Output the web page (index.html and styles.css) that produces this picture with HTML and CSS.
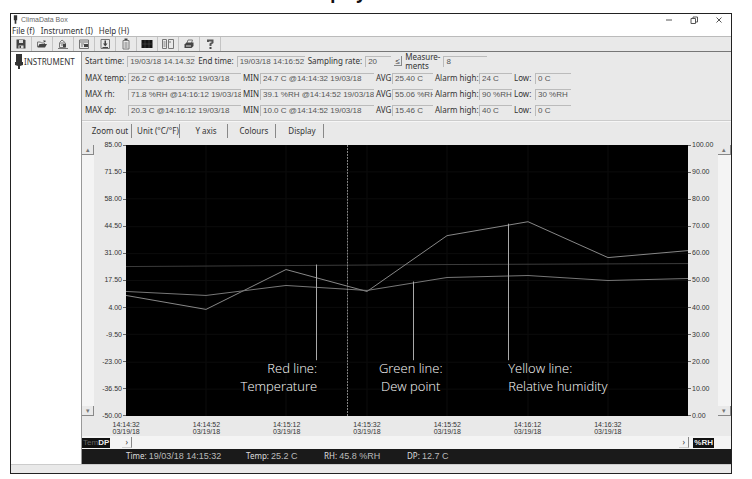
FILE: index.html
```html
<!DOCTYPE html>
<html lang="en">
<head>
  <meta charset="UTF-8">
  <meta name="viewport" content="width=device-width, initial-scale=1">
  <title>ClimaData Box</title>
  <link rel="stylesheet" href="styles.css">
</head>
<body>

  <h1 class="page-heading">Display</h1>

  <div class="window">
    <header class="titlebar">
      <svg class="app-icon" viewBox="0 0 6 10"><path d="M1 0h4v6H1zM2 6h2v4H2z"/></svg>
      <span class="app-name">ClimaData Box</span>
      <button class="win-btn" aria-label="Minimize"><svg viewBox="0 0 8 8"><path d="M1 4h6"/></svg></button>
      <button class="win-btn" aria-label="Restore"><svg viewBox="0 0 8 8"><path d="M1 2.500h4.500v5H1zM3 2.500v-1.500h4.500v5H5.500"/></svg></button>
      <button class="win-btn" aria-label="Close"><svg viewBox="0 0 8 8"><path d="M1.500 1.500l5 5M6.500 1.500l-5 5"/></svg></button>
    </header>

    <nav class="menu">
      <button>File (f)</button>
      <button>Instrument (I)</button>
      <button>Help (H)</button>
    </nav>

    <div class="toolbar">
      <button aria-label="Save"><svg viewBox="0 0 12 12"><path class="fill" d="M1.500 1.500h8l1 1v8h-9z"/><path class="paper" d="M4 2h4v3H4zM3.500 7.500h5v3h-5z"/><path class="fill" d="M4.500 8h1.500v2H4.500z"/></svg></button>
      <button aria-label="Open"><svg viewBox="0 0 12 12"><path class="line" d="M1.500 9V4h3l1 1h3v1.500"/><path class="fill" d="M1.500 9.500l2-3.500h7.500l-2 3.500zM7 2.500h2.500v1.500H8z"/></svg></button>
      <button aria-label="Connect"><svg viewBox="0 0 12 12"><path class="line" d="M2.500 4.500L5 2l3 2.500M2.500 5h6v4.500h-6zM1 10.500h10M4 7h4"/><path class="fill" d="M6 6h3v3H6z"/></svg></button>
      <button aria-label="Instrument settings"><svg viewBox="0 0 12 12"><path class="line" d="M1.500 2h9v8.500h-9zM1.500 4h9M3 6h3M3 8h2"/><path class="fill" d="M6 6h4v3H6z"/></svg></button>
      <button aria-label="Download"><svg viewBox="0 0 12 12"><path class="line" d="M2 1.500h8.500v9H2z"/><path class="fill" d="M5.500 2.500h1.500v3h1.500L6.250 8.500 4 5.500h1.500zM3.500 9h5.500v1H3.500z"/></svg></button>
      <button aria-label="Clipboard"><svg viewBox="0 0 12 12"><path class="fill" d="M4.500 0.500h3v2h-3z"/><path class="line" d="M3 2.500h6v8.500H3zM4.500 5h3M4.500 7h3M4.500 9h3"/></svg></button>
      <button aria-label="Graph"><svg viewBox="0 0 12 12"><path class="black" d="M0.500 2h11v8h-11z"/><path class="grid" d="M0.500 6h11M4 2v8M8 2v8"/></svg></button>
      <button aria-label="Table"><svg viewBox="0 0 12 12"><path class="line" d="M0.500 1.500h4v9h-4zM6.500 1.500h5v9h-5zM1.500 4h2M1.500 6h2M1.500 8h2M6.500 4H9"/></svg></button>
      <button aria-label="Print"><svg viewBox="0 0 12 12"><path class="line" d="M4 5l1-3h4.500L8.500 5"/><path class="fill" d="M1.500 6.500l2-2h7v3.500l-2 2h-7z"/><path class="paper" d="M3 7.500h5v1H3z"/></svg></button>
      <button aria-label="Help"><svg viewBox="0 0 12 12"><path class="thick" d="M4 4V2.500h4.500v2L6.500 6v2"/><path class="fill" d="M5.500 9h2v2h-2z"/></svg></button>
    </div>

    <div class="workspace">
      <aside class="tree">
        <svg class="device" viewBox="0 0 8 15"><path d="M1 0h6v8H1z"/><path d="M0 8h8v3L5 12v3H3v-3L0 11z"/></svg>
        <span>INSTRUMENT</span>
      </aside>

      <main class="panel">
        <section class="readings">
          <div class="session">
            <label for="start">Start time:</label><input id="start" class="w-time" value="19/03/18 14.14.32" readonly>
            <label for="end">End time:</label><input id="end" class="w-time" value="19/03/18 14:16:52" readonly>
            <label for="rate">Sampling rate:</label><input id="rate" class="w-rate" value="20" readonly>
            <button class="spin" aria-label="Set rate">≤</button>
            <label for="count" class="count-label">Measure-<br>ments</label><input id="count" class="w-count" value="8" readonly>
          </div>
          <div class="stats">
            <label for="t-max">MAX temp:</label><input id="t-max" value="26.2 C @14:16:52 19/03/18" readonly>
            <label for="t-min">MIN</label><input id="t-min" value="24.7 C @14:14:32 19/03/18" readonly>
            <label for="t-avg">AVG</label><input id="t-avg" value="25.40 C" readonly>
            <label for="t-high">Alarm high:</label><input id="t-high" value="24 C" readonly>
            <label for="t-low">Low:</label><input id="t-low" value="0 C" readonly>

            <label for="h-max">MAX rh:</label><input id="h-max" value="71.8 %RH @14:16:12 19/03/18" readonly>
            <label for="h-min">MIN</label><input id="h-min" value="39.1 %RH @14:14:52 19/03/18" readonly>
            <label for="h-avg">AVG</label><input id="h-avg" value="55.06 %RH" readonly>
            <label for="h-high">Alarm high:</label><input id="h-high" value="90 %RH" readonly>
            <label for="h-low">Low:</label><input id="h-low" value="30 %RH" readonly>

            <label for="d-max">MAX dp:</label><input id="d-max" value="20.3 C @14:16:12 19/03/18" readonly>
            <label for="d-min">MIN</label><input id="d-min" value="10.0 C @14:14:52 19/03/18" readonly>
            <label for="d-avg">AVG</label><input id="d-avg" value="15.46 C" readonly>
            <label for="d-high">Alarm high:</label><input id="d-high" value="40 C" readonly>
            <label for="d-low">Low:</label><input id="d-low" value="0 C" readonly>
          </div>
        </section>

        <div class="actions">
          <button>Zoom out</button>
          <button>Unit (°C/°F)</button>
          <button>Y axis</button>
          <button>Colours</button>
          <button>Display</button>
        </div>

        <section class="chart">
          <div class="scroller">
            <button aria-label="Left axis up">▴</button>
            <button aria-label="Left axis down">▾</button>
          </div>
          <div class="axis axis-left">
            <span>85.00</span><span>71.50</span><span>58.00</span><span>44.50</span><span>31.00</span><span>17.50</span><span>4.00</span><span>-9.50</span><span>-23.00</span><span>-36.50</span><span>-50.00</span>
          </div>
          <div class="plot">
            <svg viewBox="0 0 562 272" preserveAspectRatio="none">
              <path class="gridlines" d="M80 0v272M160 0v272M241 0v272M321 0v272M402 0v272M482 0v272M0 27h562M0 54h562M0 82h562M0 109h562M0 136h562M0 163h562M0 190h562M0 218h562M0 245h562"/>
              <polyline class="temp" points="0,122 160,121 321,120 562,119"/>
              <polyline class="rh" points="0,151 80,165 160,125 241,147 321,91 402,77 482,113 562,106"/>
              <polyline class="dp" points="0,147 80,151 160,141 241,146 321,133 402,131 482,136 562,134"/>
              <path class="cursor" d="M221.500 0v272"/>
              <path class="leader" d="M190.500 120v96M287.500 137v79M382.500 79v137"/>
            </svg>
            <div class="callout callout-temp">Red line:<br>Temperature</div>
            <div class="callout callout-dp">Green line:<br>Dew point</div>
            <div class="callout callout-rh">Yellow line:<br>Relative humidity</div>
          </div>
          <div class="axis axis-right">
            <span>100.00</span><span>90.00</span><span>80.00</span><span>70.00</span><span>60.00</span><span>50.00</span><span>40.00</span><span>30.00</span><span>20.00</span><span>10.00</span><span>0.00</span>
          </div>
          <div class="scroller">
            <button aria-label="Right axis up">▴</button>
            <button aria-label="Right axis down">▾</button>
          </div>
          <div class="times">
            <span>14:14:32<br>03/19/18</span>
            <span>14:14:52<br>03/19/18</span>
            <span>14:15:12<br>03/19/18</span>
            <span>14:15:32<br>03/19/18</span>
            <span>14:15:52<br>03/19/18</span>
            <span>14:16:12<br>03/19/18</span>
            <span>14:16:32<br>03/19/18</span>
          </div>
        </section>

        <div class="hscroll">
          <div class="tag"><span class="dim">Tem</span>DP</div>
          <div class="track">
            <button aria-label="Scroll left">›</button>
            <button aria-label="Scroll right">›</button>
          </div>
          <div class="tag">%RH</div>
        </div>

        <footer class="cursor-values">
          <div>Time: <b>19/03/18 14:15:32</b></div>
          <div>Temp: <b>25.2 C</b></div>
          <div>RH: <b>45.8 %RH</b></div>
          <div>DP: <b>12.7 C</b></div>
        </footer>
      </main>
    </div>

    <div class="statusbar"></div>
  </div>

</body>
</html>
```
FILE: styles.css
```css
* {
  box-sizing: border-box;
}
body {
  margin: 0;
  min-height: 100vh;
  padding: 0 20px 5px 10px;
  display: flex;
  flex-direction: column;
  background: #fff;
  color: #333;
  font: 8px/10px "Noto Sans", sans-serif;
}
button, input {
  font: inherit;
  color: inherit;
  margin: 0;
  padding: 0;
  border: 0;
  border-radius: 0;
  background: none;
}
svg {
  display: block;
}
.page-heading {
  height: 13px;
  margin: 0;
  padding: 0 72px 10px 0;
  overflow: hidden;
  display: flex;
  align-items: flex-end;
  justify-content: center;
  color: #111;
  font: bold 17px/20px "Noto Sans", sans-serif;
}
.window {
  flex: 1;
  display: flex;
  flex-direction: column;
  border: 1px solid #222;
  background: #e9e9e9;
}

/* title and menu */
.titlebar {
  display: flex;
  align-items: center;
  height: 11px;
  padding: 0 8px 0 2px;
  background: #fff;
}
.app-icon {
  width: 5px;
  height: 9px;
  margin-right: 3px;
  fill: #333;
}
.app-name {
  flex: 1;
  font: 7px/10px "Liberation Sans", sans-serif;
  color: #666;
}
.win-btn {
  width: 8px;
  margin-left: 17px;
}
.win-btn svg {
  width: 8px;
  height: 8px;
  fill: none;
  stroke: #555;
}
.menu {
  display: flex;
  gap: 6px;
  height: 11px;
  padding-left: 1px;
  background: #fff;
}
.toolbar {
  display: flex;
  height: 16px;
  border-top: 1px solid #bbb;
  border-bottom: 1px solid #777;
}
.toolbar button {
  width: 21px;
  display: flex;
  align-items: center;
  justify-content: center;
  border-right: 1px solid #c4c4c4;
}
.toolbar svg {
  width: 12px;
  height: 12px;
}
.toolbar .fill { fill: #444; }
.toolbar .black { fill: #151515; }
.toolbar .paper { fill: #ddd; }
.toolbar .line { fill: none; stroke: #777; }
.toolbar .grid { fill: none; stroke: #555; stroke-width: 0.5; }
.toolbar .thick { fill: none; stroke: #555; stroke-width: 2; }

.workspace {
  flex: 1;
  display: flex;
}
.tree {
  width: 71px;
  display: flex;
  align-items: flex-start;
  padding: 2px 0 0 4px;
  gap: 1px;
  border-right: 1px solid #999;
  background: #fff;
  line-height: 16px;
}
.device {
  flex: none;
  width: 8px;
  height: 15px;
  fill: #333;
}
.panel {
  flex: 1;
  min-width: 0;
  display: flex;
  flex-direction: column;
}

/* readings */
.readings {
  padding: 0 0 4px 3px;
  border-bottom: 1px solid #ccc;
}
.readings label {
  white-space: nowrap;
}
.readings input {
  height: 11px;
  min-width: 0;
  padding-left: 2px;
  border-top: 1px solid #bbb;
  border-left: 1px solid #bbb;
  font: 8px/10px "Liberation Sans", sans-serif;
  color: #555;
}
.session {
  display: flex;
  align-items: center;
  gap: 3px;
  height: 18px;
}
.session .w-time { width: 68px; }
.session .w-rate { width: 26px; }
.session .w-count { width: 44px; }
.session .count-label {
  line-height: 9px;
}
.spin {
  width: 8px;
  height: 10px;
  border-right: 1px solid #888;
  border-bottom: 1px solid #888;
}
.stats {
  display: grid;
  grid-template-columns: 41px 113px 15px 114px 14px 41px 42px 33px 19px 36px;
  grid-auto-rows: 12px;
  row-gap: 4px;
  column-gap: 2px;
  align-items: center;
  padding-top: 2px;
}
.actions {
  display: flex;
  gap: 5px;
  padding: 2px 7px 7px;
  border-top: 1px solid #f6f6f6;
}
.actions button {
  width: 43px;
  height: 14px;
  border-right: 1px solid #888;
  white-space: nowrap;
}

/* chart */
.chart {
  flex: 1;
  display: grid;
  grid-template-columns: 12px 32px 1fr 30px 13px;
  grid-template-rows: 1fr 20px;
  font: 7px/8px "Liberation Sans", sans-serif;
}
.scroller {
  display: flex;
  flex-direction: column;
  justify-content: space-between;
  background: #f4f4f4;
}
.scroller button {
  height: 10px;
  border-right: 1px solid #888;
  border-bottom: 1px solid #888;
  background: #e9e9e9;
  color: #777;
}
.axis {
  display: flex;
  flex-direction: column;
  justify-content: space-between;
  margin: -4px 0;
}
.axis span {
  display: flex;
  align-items: center;
  gap: 1px;
}
.axis-left span {
  justify-content: flex-end;
}
.axis-left span::after,
.axis-right span::before {
  content: "";
  width: 3px;
  height: 1px;
  background: #666;
}
.plot {
  position: relative;
  background: #000;
}
.plot svg {
  position: absolute;
  width: 100%;
  height: 100%;
  fill: none;
}
.gridlines { stroke: #0c0c0c; }
.temp { stroke: #3c3c3c; }
.rh { stroke: #888; }
.dp { stroke: #777; }
.cursor { stroke: #888; stroke-dasharray: 2 1; }
.leader { stroke: #aaa; }
.callout {
  position: absolute;
  top: 79%;
  color: #fff;
  font: 300 13px/18px "Open Sans", "Noto Sans", sans-serif;
  white-space: nowrap;
}
.callout-temp {
  right: 66%;
  text-align: right;
}
.callout-dp {
  left: 45%;
  text-align: center;
}
.callout-rh {
  left: 68%;
}
.times {
  grid-column: 3;
  display: grid;
  grid-template-columns: repeat(7, 1fr);
  margin-left: -40px;
  margin-right: 40px;
  padding-top: 5px;
  line-height: 7px;
  text-align: center;
}

/* bottom bars */
.hscroll {
  display: flex;
  align-items: center;
  height: 13px;
  padding-right: 17px;
  background: #f4f4f4;
}
.tag {
  padding: 0 1px;
  background: #111;
  color: #eee;
  font: bold 8px/10px "Liberation Sans", sans-serif;
}
.tag .dim {
  color: #666;
  font-weight: normal;
}
.track {
  flex: 1;
  display: flex;
  justify-content: space-between;
  padding: 0 4px 0 12px;
}
.track button {
  width: 10px;
  height: 11px;
  border-right: 1px solid #888;
  border-bottom: 1px solid #ccc;
}
.cursor-values {
  display: grid;
  grid-template-columns: 120px 78px 83px 1fr;
  height: 15px;
  padding: 1px 0 0 44px;
  background: #1a1a1a;
  color: #ddd;
  line-height: 12px;
}
.cursor-values b {
  font: 9px/12px "Liberation Sans", sans-serif;
  color: #bbb;
}
.statusbar {
  height: 9px;
  border-top: 1px solid #ccc;
}
```
